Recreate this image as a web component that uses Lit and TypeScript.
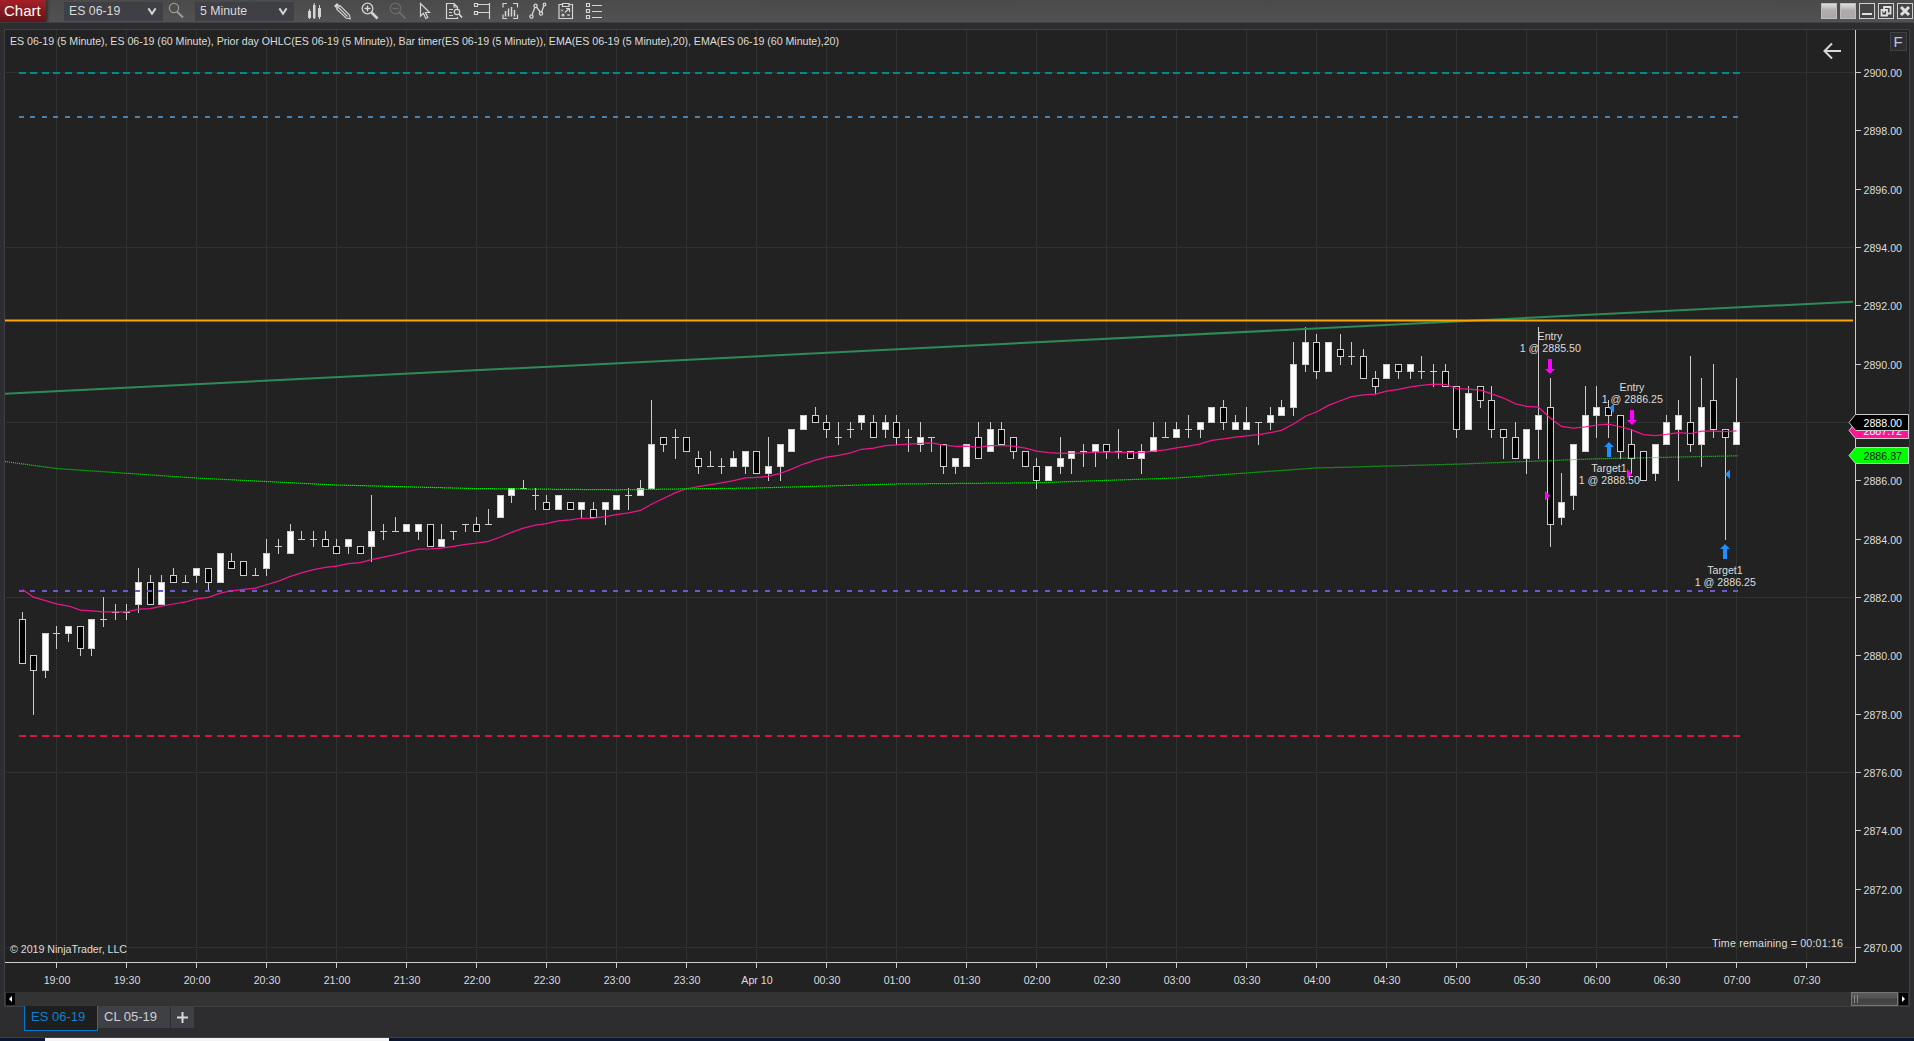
import { LitElement, html, css, svg } from "lit";
import { customElement } from "lit/decorators.js";

type Bar = [number, number, number, number];

/* Bars as open, high, low, close, counted in quarter points above 2870. */
const BARS: Bar[] = [
  [45,46,39,39],[40,40,32,38],[38,43,37,43],[43,44,41,43],[43,44,42,44],[44,44,40,41],
  [41,45,40,45],[45,48,44,45],[46,47,45,46],[46,47,45,46],[47,52,46,50],[50,51,47,47],
  [47,51,47,50],[51,52,50,50],[50,51,50,50],[51,52,50,52],[52,52,49,50],[50,54,50,54],
  [53,54,52,52],[53,53,51,51],[51,52,51,51],[52,56,51,54],[55,56,54,55],[54,58,54,57],
  [56,57,56,56],[56,57,55,56],[56,57,55,55],[55,56,54,54],[55,56,54,56],[55,55,54,54],
  [55,62,53,57],[57,58,56,57],[57,59,57,57],[57,58,57,58],[57,58,56,58],[58,58,55,55],
  [55,58,55,56],[57,57,56,57],[58,58,57,58],[58,59,57,57],[58,60,58,58],[59,62,59,62],
  [62,63,61,63],[63,64,63,63],[62,63,60,62],[61,62,60,60],[60,62,60,62],[61,61,60,60],
  [60,61,59,61],[60,61,59,59],[60,61,58,61],[60,62,60,62],[62,63,60,62],[62,64,62,63],
  [63,75,63,69],[70,70,68,69],[70,71,67,70],[70,70,68,68],[67,68,65,66],[66,68,66,66],
  [66,67,65,66],[66,68,66,67],[66,68,65,68],[68,68,65,65],[65,70,64,66],[66,69,64,69],
  [68,71,68,71],[71,73,71,73],[73,74,72,72],[72,73,70,71],[70,72,69,70],[71,72,70,71],
  [72,73,71,73],[72,73,70,70],[71,73,70,72],[72,73,69,70],[70,71,68,70],[69,72,68,70],
  [70,70,68,70],[69,69,65,66],[66,67,65,67],[66,69,66,69],[70,72,67,67],[68,72,68,71],
  [71,72,69,69],[70,70,67,68],[68,68,66,66],[66,67,63,64],[64,66,64,66],[66,70,65,67],
  [67,68,65,68],[68,69,66,68],[68,69,66,69],[69,69,67,68],[68,71,67,68],[68,68,67,67],
  [67,69,65,68],[68,72,68,70],[70,72,70,70],[70,72,70,71],[71,73,70,71],[71,72,70,72],
  [72,74,72,74],[74,75,71,72],[71,73,71,72],[71,74,71,72],[72,72,69,72],[72,74,71,73],
  [73,75,73,74],[74,83,73,80],[80,85,79,83],[83,84,78,79],[79,83,79,83],[82,84,80,81],
  [81,83,80,81],[81,82,78,78],[78,79,76,77],[78,80,78,80],[80,80,78,79],[79,80,78,80],
  [79,81,78,79],[79,80,77,79],[79,80,77,77],[77,77,70,71],[71,77,71,76],[77,77,74,75],
  [75,77,70,71],[71,71,67,70],[70,72,67,67],[67,71,65,71],[71,85,67,73],[74,78,55,58],
  [59,65,58,61],[62,69,60,69],[68,77,68,73],[73,77,70,74],[74,75,70,73],[73,73,67,68],
  [69,71,65,67],[68,68,64,64],[65,69,64,69],[69,73,69,72],[71,75,64,73],[72,81,68,69],
  [69,78,66,74],[75,80,70,71],[71,71,56,70],[69,78,69,72],
];

const barX = (i: number) => (i === 0 ? 22 : Math.ceil(56 + ((i - 3) * 70) / 6 - 0.001));
const rawY = (tick: number) => 947 - tick * 7.29167;
const tickY = (tick: number) => Math.round(rawY(tick));

const TIMES = [
  "19:00","19:30","20:00","20:30","21:00","21:30","22:00","22:30","23:00","23:30","Apr 10","00:30","01:00",
  "01:30","02:00","02:30","03:00","03:30","04:00","04:30","05:00","05:30","06:00","06:30","07:00","07:30",
];
const PRICES = Array.from({ length: 16 }, (_, i) => 2870 + i * 2);

const HOURLY_EMA: [number, number][] = [
  [5,461.5],[56,468.5],[196,478],[336,485],[476,488.6],[616,489.8],[756,488],[896,484],
  [1036,482.8],[1176,478],[1316,468],[1456,464.2],[1596,458.8],[1738,455.8],
];

function emaPoints(): string {
  let v = 49.1;
  return BARS.map((b, i) => {
    if (i > 0) v += ((b[3] - v) * 2) / 21;
    return `${barX(i) + 0.5},${(rawY(v) + 0.5).toFixed(2)}`;
  }).join(" ");
}

const LEVELS = [
  { row: 72, width: 7, color: "#008b8b" },
  { row: 116, width: 5, color: "#4682b4" },
  { row: 590, width: 5, color: "#6a5acd" },
  { row: 735, width: 7, color: "#dc143c" },
];

const ICONS = [
  svg`<g fill="#d4d4d4"><path d="M8 11h3v7h-3zM13 5h2.500v13h-2.500zM18 8h3v9h-3z"/><path d="M9 9h1v10h-1zM13.700 3h1v16h-1zM19 5h1v14h-1z"/></g>`,
  svg`<g fill="none" stroke="#d4d4d4"><path d="M8.500 9l3.500-3.500 9.500 9.500.7 3.800-4.200-.8z" stroke-width="1.100"/><path d="M10.500 7.500l9 9" stroke-width="1.100"/><path d="M6 6l3-3 2.200 2.200-3 3z" fill="#d4d4d4" stroke="none"/></g>`,
  svg`<g fill="none" stroke="#d4d4d4"><circle cx="11.500" cy="8.500" r="5.300" stroke-width="1.300"/><path d="M8.500 8.500h6M11.500 5.500v6" stroke-width="1.300"/><path d="M15.500 12.500l6 6" stroke-width="2.600"/></g>`,
  svg`<g fill="none" stroke="#6a6a6a"><circle cx="11.500" cy="8.500" r="5.300" stroke-width="1.200"/><path d="M8.500 8.500h6" stroke-width="1.300"/><path d="M15.500 12.500l6 6" stroke-width="2"/></g>`,
  svg`<path d="M8.500 3.500v12.500l3-2.800 2.300 5.300 2-1-2.300-5h4z" fill="none" stroke="#d4d4d4" stroke-width="1.200"/>`,
  svg`<g fill="none" stroke="#d4d4d4" stroke-width="1.200"><path d="M17.500 17v1.500h-11v-15h7.500l3.500 3.500v2M14 3.500v3.500h3.500M9 9.500h4M9 12.500h3M9 15.500h4"/><circle cx="17" cy="12" r="2.700"/><path d="M19 14l3 3.500" stroke-width="1.800"/></g>`,
  svg`<g fill="none" stroke="#d4d4d4" stroke-width="1.200"><path d="M6.500 3.500h3v3h-3zM6.500 11.500h3v3h-3zM10 4.500h11M10 12.500h11M21.500 3v16"/></g>`,
  svg`<g fill="none" stroke="#d4d4d4" stroke-width="1.200"><path d="M7 7.500v-4h4M17 3.500h4.500v4M21.500 14.500v4h-4.500M11 18.500h-4v-4"/><path d="M9.500 11v5.500M12.500 8.500v8M15.500 7v9.500M18.500 10v6.500" stroke-width="1.500"/></g>`,
  svg`<g fill="none" stroke="#d4d4d4" stroke-width="1.300"><path d="M8 15l3-8M12.500 7l4 5.500M17.500 12.500l2.500-7.500"/><circle cx="7.500" cy="16.500" r="1.600"/><circle cx="11.500" cy="5.800" r="1.600"/><circle cx="17" cy="13.500" r="1.600"/><circle cx="20.500" cy="4.500" r="1.300"/></g>`,
  svg`<g fill="none" stroke="#d4d4d4" stroke-width="1.200"><path d="M10.500 4.500h-3.500v14h13.500v-14h-3.500M10.500 3.500h6.500v3h-6.500zM13 12.500l4-4M14 8.500h3.500v3.500"/><path d="M9 9.500l2 2M11 9.500l-2 2M15.500 14l2 2M17.500 14l-2 2" stroke-width="1"/><circle cx="11" cy="15" r="1"/></g>`,
  svg`<g fill="none" stroke="#d4d4d4" stroke-width="1.200"><path d="M6.500 3.500h3v3h-3zM6.500 9.500h3v3h-3zM6.500 15.500h3v3h-3zM12 5.500h10M12 11.500h10M12 17.500h10"/></g>`,
];

@customElement("chart-toolbar")
class ChartToolbar extends LitElement {
  static styles = css`
    :host { display: flex; height: 22px; align-items: center; background: linear-gradient(#4a4a4a, #525252);
      border-bottom: 1px solid #3f3f46; font: 14px "Liberation Sans", Arial, sans-serif; color: #dcdcdc; }
    .brand { width: 46px; height: 22px; background: linear-gradient(#a51f27, #64141a); color: #fff; font-size: 15px;
      line-height: 22px; padding-left: 4px; box-sizing: border-box; margin-right: 18px; box-shadow: 2px 0 2px #333; }
    .combo { display: flex; align-items: center; justify-content: space-between; width: 99px; height: 19px; background: #3f3f46;
      box-sizing: border-box; padding: 0 6px 0 5px; font-size: 12.3px; color: #dadada; }
    .combo svg { width: 10px; height: 9px; }
    .search { width: 32px; height: 22px; }
    .icons { display: flex; margin-left: 6px; }
    .icons svg { width: 28px; height: 22px; }
    .window { display: flex; gap: 3px; margin-left: auto; margin-right: 1px; }
    .window span { width: 16px; height: 16px; box-sizing: border-box; display: flex; border: 1px solid #d0d0d0; background: #454545; }
    .window .flat { border-color: #bdbdbd; background: linear-gradient(#dedede, #b0acae 45%, #aba7a9); }
    .window svg { width: 14px; height: 14px; }
  `;
  combo(label: string) {
    return html`<div class="combo"><span>${label}</span><svg viewBox="0 0 11 10"><path d="M1.500 1.500L5.500 7.500L9.500 1.500" fill="none" stroke="#d4d4d4" stroke-width="2.200"/></svg></div>`;
  }
  render() {
    return html`
      <div class="brand">Chart</div>
      ${this.combo("ES 06-19")}
      <svg class="search" viewBox="0 0 32 22"><circle cx="11" cy="8" r="4.600" fill="none" stroke="#9a9a9a" stroke-width="1.300"/><path d="M14 11.500l6 6" stroke="#9a9a9a" stroke-width="2"/></svg>
      ${this.combo("5 Minute")}
      <div class="icons">${ICONS.map((g) => html`<svg viewBox="0 0 28 22">${g}</svg>`)}</div>
      <div class="window">
        <span class="flat"></span><span class="flat"></span>
        <span><svg viewBox="0 0 14 14"><path d="M2 10h10" stroke="#e0e0e0" stroke-width="2"/></svg></span>
        <span><svg viewBox="0 0 14 14"><path d="M5 8.500V3h6.500v6.500H8M2.500 6h5.500v5.500H2.500z" fill="none" stroke="#e0e0e0" stroke-width="1.800"/></svg></span>
        <span><svg viewBox="0 0 14 14"><path d="M3 3l8 8M11 3l-8 8" stroke="#e0e0e0" stroke-width="3"/></svg></span>
      </div>`;
  }
}

@customElement("price-chart")
class PriceChart extends LitElement {
  static styles = css`
    :host { display: block; width: 1904px; height: 962px; }
    .plot { display: block; width: 1904px; height: 962px; }
    .label { font: 10.67px "Liberation Sans", Arial, sans-serif; fill: #dcdcdc; }
    .mid { text-anchor: middle; }
    .bright { fill: #fff; }
    .dark { fill: #101010; }
    .fixed { font-size: 15px; fill: #b9c6dc; }
  `;
  candle(b: Bar, i: number) {
    const [o, h, l, c] = b;
    const x = barX(i);
    const hi = tickY(h), lo = tickY(l);
    const top = tickY(Math.max(o, c)), bottom = tickY(Math.min(o, c));
    return svg`
      <rect x=${x} y=${hi} width="1" height=${lo - hi + 1} fill="#cccccc"/>
      ${o === c
        ? svg`<rect x=${x - 3} y=${top} width="7" height="1" fill="#cccccc"/>`
        : svg`<rect x=${x - 2.5} y=${top + 0.5} width="6" height=${bottom - top} stroke="#cccccc" fill=${c > o ? "#ffffff" : "#000000"}/>`}`;
  }
  marker(x: number, y: number, up: boolean, lines: string[], base: number) {
    const s = up ? -1 : 1;
    return svg`
      <path d="M${x - 2} ${y}h4v${10 * s}h3l-5 ${5 * s}l-5 ${-5 * s}h3z" fill=${up ? "#1e90ff" : "#ff00ff"}/>
      <text class="label mid" x=${x} y=${base}>${lines[0]}</text>
      <text class="label mid" x=${x + 0.3} y=${base + 12}>${lines[1]}</text>`;
  }
  tag(top: number, fill: string, cls: string, text: string) {
    return svg`<path d="M1855.500 ${top + 0.5}h53v16h-53l-6.500 -8z" fill=${fill} stroke="#cccccc"/>
      <text class="label ${cls}" x="1863.500" y=${top + 12.7}>${text}</text>`;
  }
  render() {
    return html`<svg class="plot" viewBox="5 30 1904 962">
      ${PRICES.filter((p) => (p - 2870) % 6 === 0).map(
        (p) => svg`<rect x="6" y=${tickY((p - 2870) * 4)} width="1848" height="1" fill="#303031"/>`)}
      ${TIMES.map((_, i) => svg`<rect x=${56 + i * 70} y="30" width="1" height="930" fill="#303031"/>`)}
      <rect x="1855" y="30" width="1" height="933" fill="#cccccc"/>
      <rect x="5" y="962" width="1851" height="1" fill="#cccccc"/>
      ${PRICES.map((p) => {
        const y = tickY((p - 2870) * 4);
        return svg`<rect x="1856" y=${y} width="5" height="1" fill="#cccccc"/>
          <text class="label" x="1863.500" y=${y + 4.5}>${p.toFixed(2)}</text>`;
      })}
      ${TIMES.map((t, i) => svg`<rect x=${56 + i * 70} y="963" width="1" height="5" fill="#cccccc"/>
        <text class="label mid" x=${57 + i * 70} y="984">${t}</text>`)}
      ${BARS.map((b, i) => this.candle(b, i))}
      <path d="M5 393.700L1853 301.700" stroke="#2e8b57" stroke-width="2"/>
      <path d="M5 320.500H1853" stroke="#ffa500" stroke-width="2"/>
      ${LEVELS.map((l) => BARS.map((_, i) => svg`<rect x=${barX(i) - 3} y=${l.row} width=${l.width} height="2" fill=${l.color}/>`))}
      <polyline points=${emaPoints()} fill="none" stroke="#ff1493" stroke-width="1.250" opacity=".92"/>
      <polyline points=${HOURLY_EMA.map((p) => p.join(",")).join(" ")} fill="none" stroke="#00f000" stroke-width="1.250" stroke-dasharray="1 1"/>
      <path d="M1545 491v9.500l5-4.700zM1627 469v9.500l5-4.700z" fill="#ff00ff"/>
      <path d="M1614 403.500v9.500l-5-4.700zM1730 469.500v9.500l-5-4.700z" fill="#1e90ff"/>
      ${this.marker(1550, 359, false, ["Entry", "1 @ 2885.50"], 340)}
      ${this.marker(1632, 410, false, ["Entry", "1 @ 2886.25"], 391)}
      ${this.marker(1609, 457, true, ["Target1", "1 @ 2888.50"], 472)}
      ${this.marker(1725, 559, true, ["Target1", "1 @ 2886.25"], 574)}
      <text class="label" x="10" y="45" textLength="829">ES 06-19 (5 Minute), ES 06-19 (60 Minute), Prior day OHLC(ES 06-19 (5 Minute)), Bar timer(ES 06-19 (5 Minute)), EMA(ES 06-19 (5 Minute),20), EMA(ES 06-19 (60 Minute),20)</text>
      <text class="label" x="10" y="953" textLength="117">© 2019 NinjaTrader, LLC</text>
      <text class="label" x="1712" y="947" textLength="131">Time remaining = 00:01:16</text>
      <path d="M1824 51h17M1832 43.500l-7.500 7.500l7.500 7.500" fill="none" stroke="#d8d8d8" stroke-width="2"/>
      <rect x="1890.500" y="32.500" width="16" height="18" fill="#2d2d30" stroke="#3f3f46"/>
      <text class="label fixed" x="1893.500" y="47">F</text>
      ${this.tag(422, "#ff1493", "bright", "2887.72")}
      ${this.tag(414, "#000000", "bright", "2888.00")}
      ${this.tag(447, "#00ff00", "dark", "2886.87")}
    </svg>`;
  }
}

@customElement("app-root")
class AppRoot extends LitElement {
  static styles = css`
    :host { display: flex; flex-direction: column; width: 1914px; height: 1041px; overflow: hidden; background: #2d2d30;
      font-family: "Liberation Sans", Arial, sans-serif; }
    .panel { margin: 6px 4px 0 4px; box-sizing: border-box; width: 1906px; height: 978px; border: 1px solid #3f3f46; background: #222222; }
    .scroll { display: flex; align-items: center; height: 14px; background: #333333; padding: 0 1px; }
    .arrow { width: 9px; height: 12px; background: #000; display: flex; }
    .thumb { margin-left: auto; margin-right: 1px; width: 47px; height: 14px; box-sizing: border-box; border: 1px solid #777;
      background: linear-gradient(#5c5c5c, #505050 45%, #404040 50%, #484848); display: flex; align-items: center; gap: 2px; padding-left: 2px; }
    .grip { width: 1px; height: 8px; background: #888; }
    .tabs { display: flex; margin-left: 24px; margin-top: -1px; height: 25px; align-items: flex-start; font-size: 13px; line-height: 22px; color: #d0d0d0; }
    .tab { box-sizing: border-box; height: 21px; margin-top: 1px; background: #3f3f46; }
    .tab.active { width: 74px; height: 25px; margin-top: 0; background: #1e1e1e; border: 1px solid #007acc; border-top: none; color: #0f7fd0; padding-left: 6px; }
    .other { width: 72px; padding-left: 6px; margin-right: 1px; line-height: 20px; }
    .add { width: 23px; display: flex; justify-content: center; align-items: center; }
    .footer { margin-top: auto; height: 4px; border-top: 1px solid #3f3f46; box-sizing: border-box; background: #0a1733; display: flex; }
    .sheet { margin-left: 45px; width: 344px; background: #f4f4f6; }
  `;
  render() {
    return html`
      <chart-toolbar></chart-toolbar>
      <div class="panel">
        <price-chart></price-chart>
        <div class="scroll">
          <svg class="arrow" viewBox="0 0 9 12"><path d="M6 3v6l-3-3z" fill="#fff"/></svg>
          <div class="thumb"><i class="grip"></i><i class="grip"></i></div>
          <svg class="arrow" viewBox="0 0 9 12"><path d="M3 3v6l3-3z" fill="#fff"/></svg>
        </div>
      </div>
      <div class="tabs">
        <div class="tab active">ES 06-19</div>
        <div class="tab other">CL 05-19</div>
        <div class="tab add"><svg width="11" height="11" viewBox="0 0 11 11"><path d="M0 5.500h11M5.500 0v11" stroke="#d8d8d8" stroke-width="2"/></svg></div>
      </div>
      <div class="footer"><div class="sheet"></div></div>`;
  }
}
